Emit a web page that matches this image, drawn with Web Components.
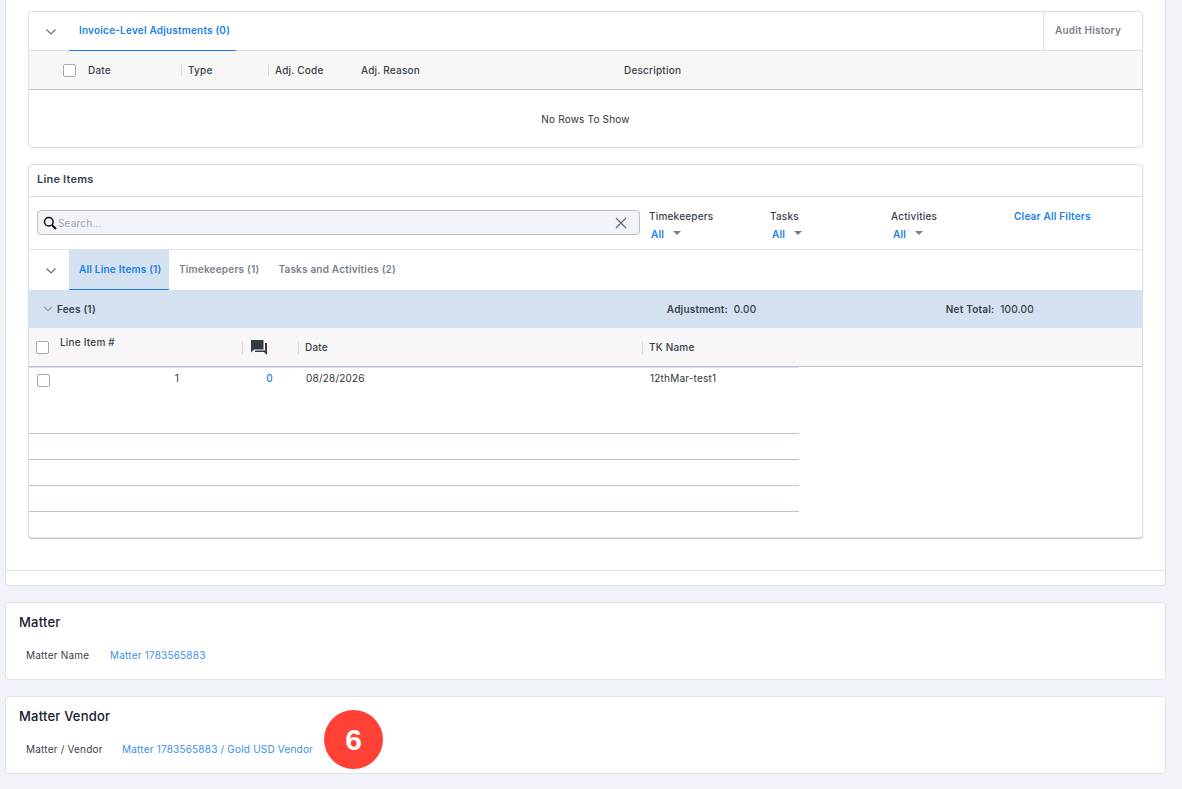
<!DOCTYPE html>
<html lang="en">
<head>
<meta charset="utf-8">
<title>Invoice</title>
<style>
  html, body { margin: 0; height: 789px; overflow: hidden; background: #f0f3f7; }
  body { font-family: Inter, "Liberation Sans", sans-serif; font-size: 10px; color: #3a4149; }
</style>
</head>
<body>
<invoice-page>
  <invoice-panel>
    <adjustments-card></adjustments-card>
    <line-items-card></line-items-card>
  </invoice-panel>
  <info-card heading="Matter" label="Matter Name" link="Matter 1783565883" label-width="84"></info-card>
  <info-card heading="Matter Vendor" label="Matter / Vendor" link="Matter 1783565883 / Gold USD Vendor" label-width="96">
    <step-badge>6</step-badge>
  </info-card>
</invoice-page>

<script>
// Iconos compartidos
const chevron = `<svg width="12" height="8" viewBox="0 0 12 8" fill="none" stroke="#6b7178" stroke-width="1.2"><path d="M1.5 1.5 6 6l4.5-4.5"/></svg>`;
const caret = `<svg width="8" height="4" viewBox="0 0 8 4" fill="#7d7f82"><path d="M0 0h8L4 4z"/></svg>`;
const checkCss = `
  .check { display: block; box-sizing: border-box; width: 13px; height: 13px; border: 1.5px solid #a9a9a9; border-radius: 2px; background: #fff; }
`;

// Contenedor de la pagina
class InvoicePage extends HTMLElement {
    connectedCallback() {
        this.attachShadow({ mode: 'open' }).innerHTML = `
            <style>
                :host { display: flex; flex-direction: column; gap: 16px; padding: 0 16px 0 5px; }
            </style>
            <slot></slot>
        `;
    }
}
customElements.define("invoice-page", InvoicePage);

// Panel blanco con el pie vacio
class InvoicePanel extends HTMLElement {
    connectedCallback() {
        this.attachShadow({ mode: 'open' }).innerHTML = `
            <style>
                :host { display: block; box-sizing: border-box; height: 586px; background: #fff; border: 1px solid #dbe3ea; border-top: 0; border-radius: 0 0 4px 4px; }
                .body { display: flex; flex-direction: column; gap: 16px; height: 571px; box-sizing: border-box; padding: 11px 22px 0; border-bottom: 1px solid #dbe3ea; }
            </style>
            <div class="body"><slot></slot></div>
        `;
    }
}
customElements.define("invoice-panel", InvoicePanel);

// Ajustes a nivel de factura
class AdjustmentsCard extends HTMLElement {
    connectedCallback() {
        this.attachShadow({ mode: 'open' }).innerHTML = `
            <style>
                ${checkCss}
                :host { display: block; box-sizing: border-box; height: 137px; border: 1px solid #d6e0e9; border-radius: 4px; background: #fff; letter-spacing: .2px; }
                .tabs { display: flex; height: 39px; box-sizing: border-box; border-bottom: 1px solid #d6e0e9; }
                .toggle { width: 40px; display: flex; align-items: center; justify-content: center; padding-top: 1px; padding-left: 4px; box-sizing: border-box; }
                .tab { width: 167px; box-sizing: border-box; margin-bottom: -1px; padding: 12px 0 0 10px; margin-left: 0; font-weight: 600; color: #1a7fe8; border-bottom: 1px solid #1a7fe8; }
                .audit { margin-left: auto; width: 99px; box-sizing: border-box; border-left: 1px solid #d6e0e9; padding: 12px 0 0 11px; font-weight: 600; color: #7b8087; }
                .head { display: grid; grid-template-columns: 47px 105px 87px 86px 270px 326px 1fr; align-items: center; height: 39px; box-sizing: border-box; background: #f7f7f7; border-bottom: 1px solid #bcc3cb; font-weight: 500; }
                .head span { box-sizing: border-box; padding-left: 6px; border-left: 1px solid #d8d8d8; line-height: 12px; white-space: nowrap; }
                .head .cb { display: flex; justify-content: flex-end; gap: 0; }
                .head .date { border-left: 0; padding-left: 12px; margin-left: 0; }
                .head .plain { border-left: 0; }
                .head .expand { text-align: right; padding: 0 10px 0 0; border-left: 0; border-right: 1px solid #d8d8d8; color: #1a7fe8; font-weight: 600; }
                .head .amount { border-left: 0; padding: 0 7px 0 0; text-align: right; font-weight: 600; }
                .empty { display: flex; align-items: center; justify-content: center; height: 57px; color: #333; }
            </style>
            <div class="tabs">
                <div class="toggle">${chevron}</div>
                <div class="tab">Invoice-Level Adjustments (0)</div>
                <div class="audit">Audit History</div>
            </div>
            <div class="head">
                <div class="cb"><i class="check"></i></div>
                <span class="date">Date</span>
                <span>Type</span>
                <span>Adj. Code</span>
                <span class="plain" style="padding-left:7px">Adj. Reason</span>
                <span class="plain" style="padding-left:0">Description</span>
                <span class="plain"></span>
            </div>
            <div class="empty">No Rows To Show</div>
        `;
    }
}
customElements.define("adjustments-card", AdjustmentsCard);

// Partidas con filtros y tabla
class LineItemsCard extends HTMLElement {
    connectedCallback() {
        const filas = [0, 1, 2, 3].map(i => `<div class="row${i === 0 ? ' first' : ''}"></div>`);
        this.attachShadow({ mode: 'open' }).innerHTML = `
            <style>
                ${checkCss}
                :host { display: block; box-sizing: border-box; height: 374px; border: 1px solid #d6e0e9; border-radius: 4px; background: #fff; box-shadow: 0 1px 1px #bccad6; letter-spacing: .2px; }
                .title { height: 32px; box-sizing: border-box; padding: 8px 0 0 8px; font-size: 11px; font-weight: 600; line-height: 13px; border-bottom: 1px solid #d6e0e9; }
                .filters { display: flex; height: 53px; box-sizing: border-box; border-bottom: 1px solid #dde2e7; padding: 13px 0 0 8px; }
                .search { width: 603px; height: 25px; box-sizing: border-box; display: flex; align-items: center; background: #f0f3f7; border: 1px solid #b9bec4; border-radius: 4px; padding: 0 12px 0 5px; color: #a2a7ad; }
                .search .ph { margin-left: 1px; flex: 1; }
                .filter { width: 121px; box-sizing: border-box; padding-left: 0; font-weight: 500; line-height: 12px; }
                .filter.first { margin-left: 9px; }
                .filter .val { display: flex; align-items: center; gap: 9px; margin: 6px 0 0 2px; color: #1a7fe8; font-weight: 600; }
                .filter .val svg { margin-top: -3px; }
                .clear { margin-left: 2px; color: #1a7fe8; font-weight: 600; line-height: 12px; }
                .tabs { display: flex; height: 40px; }
                .toggle { width: 40px; display: flex; align-items: center; justify-content: center; padding: 2px 0 0 4px; box-sizing: border-box; }
                .tab { box-sizing: border-box; padding: 13px 10px 0; font-weight: 600; color: #7b8087; white-space: nowrap; }
                .tab.on { width: 100px; background: #d4e1f0; color: #1a7fe8; border-bottom: 1px solid #1a7fe8; }
                .band { display: flex; align-items: center; height: 38px; background: #d4e1f0; font-weight: 500; }
                .band .chev { margin: 0 4px 0 14px; display: flex; }
                .band .chev svg { width: 10px; }
                .band b { font-weight: 600; }
                .band .adj { position: static; margin-left: 571px; width: 279px; }
                .head, .row { display: grid; grid-template-columns: 31px 182px 56px 344px 1fr; }
                .head { height: 39px; background: #f7f7f7; border-bottom: 1px solid #b8c4d0; box-sizing: border-box; align-items: center; font-weight: 500; }
                .head > div { box-sizing: border-box; height: 13px; padding-left: 6px; border-left: 1px solid #d8d8d8; line-height: 13px; }
                .head .cb, .head .num { border: 0; padding: 0; }
                .head .cb { padding-left: 7px; height: 13px; }
                .head .num { height: auto; align-self: start; padding-top: 8px; }
                .head .talk { padding-left: 8px; height: 13px; display: flex; align-items: center; }
                .rows { width: 770px; }
                .row { height: 67px; box-sizing: border-box; border-bottom: 1px solid #b8c6d3; color: #2f353b; line-height: 12px; padding-top: 4px; }
                .row.first { border-top: 1px solid #dcdcea; }
                .row.blank { height: 26px; display: block; padding: 0; }
                .row .cb { padding: 2px 0 0 8px; }
                .row .num { text-align: right; padding-right: 63px; }
                .row .count { text-align: right; color: #1a7fe8; font-weight: 500; padding-right: 25px; }
                .row .date { padding-left: 8px; }
                .row .tk { padding-left: 8px; }
            </style>
            <div class="title">Line Items</div>
            <div class="filters">
                <div class="search">
                    <svg width="14" height="14" viewBox="0 0 14 14" fill="none" stroke="#111" stroke-width="1.5"><circle cx="5.8" cy="5.8" r="4.3"/><path d="m9 9 4 4" stroke-width="1.9"/></svg>
                    <span class="ph">Search...</span>
                    <svg width="12" height="12" viewBox="0 0 12 12" fill="none" stroke="#5f646a" stroke-width="1.1"><path d="m1 1 10 10M11 1 1 11"/></svg>
                </div>
                <div class="filter first">Timekeepers<div class="val">All ${caret}</div></div>
                <div class="filter">Tasks<div class="val">All ${caret}</div></div>
                <div class="filter">Activities<div class="val">All ${caret}</div></div>
                <div class="clear">Clear All Filters</div>
            </div>
            <div class="tabs">
                <div class="toggle">${chevron}</div>
                <div class="tab on">All Line Items (1)</div>
                <div class="tab">Timekeepers (1)</div>
                <div class="tab" style="padding-left:9px">Tasks and Activities (2)</div>
            </div>
            <div class="band">
                <span class="chev">${chevron}</span><b>Fees (1)</b>
                <span class="adj"><b>Adjustment:</b>&nbsp; 0.00</span>
                <span><b>Net Total:</b>&nbsp; 100.00</span>
            </div>
            <div class="head">
                <div class="cb"><i class="check"></i></div>
                <div class="num">Line Item #</div>
                <div class="talk"><svg width="16" height="15" viewBox="0 0 16 15" fill="#343a40"><path d="M0 0h12.5v9.5H3L0 12.5zM14 3h2v12l-3-3H4v-1.5h10z"/></svg></div>
                <div>Date</div>
                <div>TK Name</div>
            </div>
            <div class="rows">
                <div class="row first">
                    <div class="cb"><i class="check"></i></div>
                    <div class="num">1</div>
                    <div class="count">0</div>
                    <div class="date">08/28/2026</div>
                    <div class="tk">12thMar-test1</div>
                </div>
                <div class="row blank"></div>
                <div class="row blank"></div>
                <div class="row blank"></div>
            </div>
        `;
    }
}
customElements.define("line-items-card", LineItemsCard);

// Tarjeta de dato con titulo, etiqueta y enlace
class InfoCard extends HTMLElement {
    connectedCallback() {
        const ancho = this.getAttribute('label-width');
        this.attachShadow({ mode: 'open' }).innerHTML = `
            <style>
                :host { display: block; position: relative; box-sizing: border-box; height: 78px; background: #fff; border: 1px solid #dbe3ea; border-radius: 4px; padding: 11px 13px 0; }
                h2 { margin: 0; font-size: 13px; font-weight: 500; line-height: 16px; color: #17202b; letter-spacing: .2px; }
                .row { display: flex; margin: 19px 0 0 7px; line-height: 12px; letter-spacing: .2px; }
                .label { width: ${ancho}px; color: #3a4149; }
                .link { color: #3d8fe8; }
            </style>
            <h2>${this.getAttribute('heading')}</h2>
            <div class="row"><span class="label">${this.getAttribute('label')}</span><span class="link">${this.getAttribute('link')}</span></div>
            <slot></slot>
        `;
    }
}
customElements.define("info-card", InfoCard);

// Marca numerada roja encima de la tarjeta
class StepBadge extends HTMLElement {
    connectedCallback() {
        this.attachShadow({ mode: 'open' }).innerHTML = `
            <style>
                :host { position: absolute; left: 318px; top: 13px; width: 59px; height: 59px; display: flex; align-items: center; justify-content: center; border-radius: 50%; background: #ff4136; color: #fff; font: 700 30px "Liberation Sans", Arial, sans-serif; }
            </style>
            <slot></slot>
        `;
    }
}
customElements.define("step-badge", StepBadge);
</script>
</body>
</html>
